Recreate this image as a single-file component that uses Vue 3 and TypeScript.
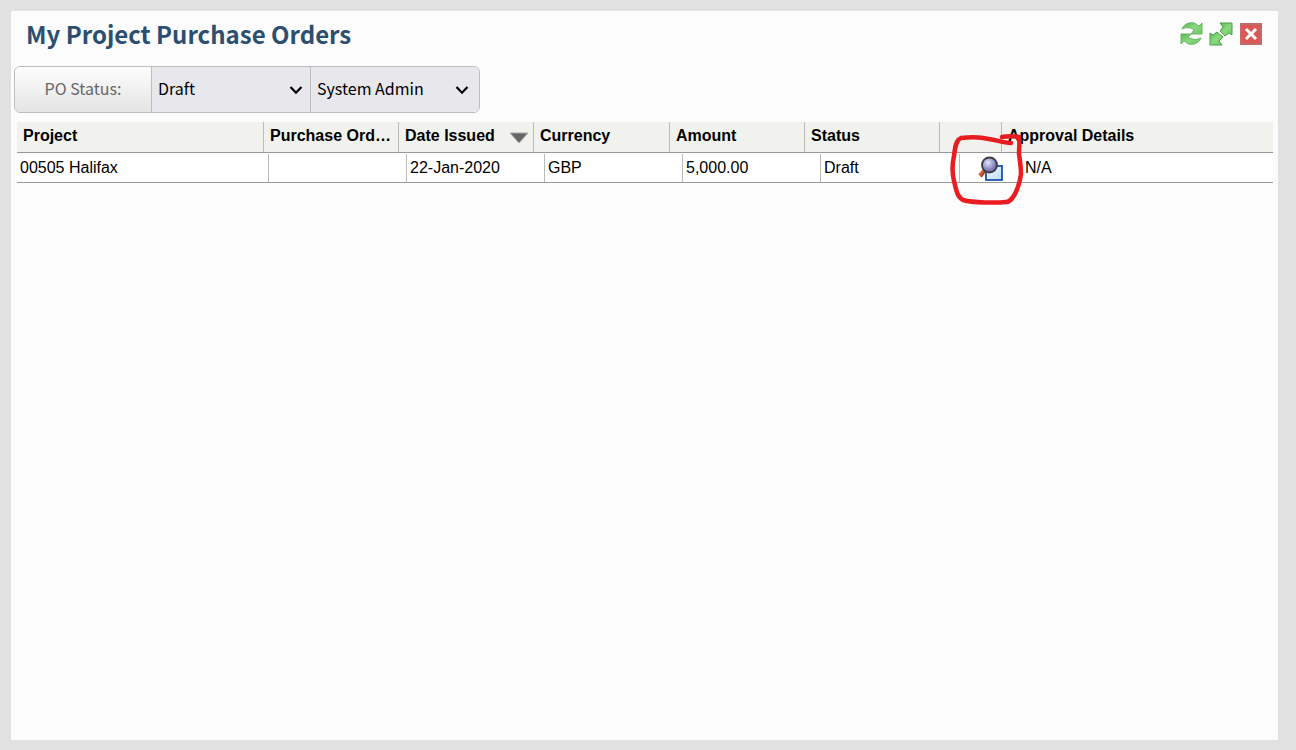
<script setup lang="ts">
import { ref } from 'vue'

interface Column {
  key: string
  label: string
  sorted?: boolean
}

interface Order {
  project: string
  number: string
  issued: string
  currency: string
  amount: string
  status: string
  approval: string
}

const columns: Column[] = [
  { key: 'project', label: 'Project' },
  { key: 'number', label: 'Purchase Ord…' },
  { key: 'issued', label: 'Date Issued', sorted: true },
  { key: 'currency', label: 'Currency' },
  { key: 'amount', label: 'Amount' },
  { key: 'status', label: 'Status' },
  { key: 'view', label: '' },
  { key: 'approval', label: 'Approval Details' },
]

const orders: Order[] = [
  {
    project: '00505 Halifax',
    number: '',
    issued: '22-Jan-2020',
    currency: 'GBP',
    amount: '5,000.00',
    status: 'Draft',
    approval: 'N/A',
  },
]

const status = ref('Draft')
const user = ref('System Admin')
</script>

<template>
  <main class="panel">
    <header class="panel-head">
      <h1>My Project Purchase Orders</h1>
      <div class="tools">
        <button type="button" class="tool" aria-label="Refresh">
          <svg viewBox="0 0 24 26" width="24" height="26">
            <defs>
              <linearGradient id="green" x1="0" y1="0" x2="1" y2="1">
                <stop offset="0" stop-color="#5cb755" />
                <stop offset="0.5" stop-color="#8ad880" />
                <stop offset="1" stop-color="#68c662" />
              </linearGradient>
            </defs>
            <g fill="url(#green)" stroke="#68b365" stroke-width="1" stroke-linejoin="round">
              <path d="M3 8 C5 3 10 1 15 2 C18 3 19 5 20 5 L23 2 V13 H12 L15 9 C12 6 7 6 3 8 Z" />
              <path d="M22 17 C20 22 15 24 10 23 C7 22 6 20 5 20 L2 23 V13 H12 L9 16 C13 19 18 19 22 17 Z" />
            </g>
          </svg>
        </button>
        <button type="button" class="tool" aria-label="Expand">
          <svg viewBox="0 0 24 26" width="24" height="26">
            <g fill="url(#green)" stroke="#4f9f4d" stroke-width="1" stroke-linejoin="round">
              <path d="M11 2 H23 V14 L20 12 L16 15 L11 10 L14 6 Z" />
              <path d="M1 12 L4 14 L8 11 L14 16 L10 20 L13 24 H1 Z" />
            </g>
          </svg>
        </button>
        <button type="button" class="tool" aria-label="Close">
          <svg viewBox="0 0 24 26" width="24" height="26">
            <rect x="2" y="3" width="20" height="20" fill="#dc5858" stroke="#bd6c6a" stroke-width="2" />
            <path d="M7 8 L17 18 M17 8 L7 18" stroke="#fff" stroke-width="3" />
          </svg>
        </button>
      </div>
    </header>

    <form class="filters" @submit.prevent>
      <label class="filter-label" for="po-status">PO Status:</label>
      <div class="picker">
        <select id="po-status" v-model="status">
          <option>Draft</option>
          <option>Approved</option>
        </select>
        <svg class="chevron" viewBox="0 0 14 10" width="14" height="10" aria-hidden="true">
          <path d="M1.500 2 L7 7.700 L12.500 2" />
        </svg>
      </div>
      <div class="picker picker-user">
        <select v-model="user" aria-label="User">
          <option>System Admin</option>
        </select>
        <svg class="chevron" viewBox="0 0 14 10" width="14" height="10" aria-hidden="true">
          <path d="M1.500 2 L7 7.700 L12.500 2" />
        </svg>
      </div>
    </form>

    <table class="orders">
      <thead>
        <tr>
          <th v-for="column in columns" :key="column.key" scope="col">
            <span>{{ column.label }}</span>
            <svg v-if="column.sorted" class="sort" viewBox="0 0 20 12" width="20" height="12" aria-hidden="true">
              <path d="M1 1 H19 L10 11 Z" fill="#666" stroke="#aaa" stroke-width="1" />
            </svg>
          </th>
        </tr>
      </thead>
      <tbody>
        <tr v-for="order in orders" :key="order.project">
          <td>{{ order.project }}</td>
          <td>{{ order.number }}</td>
          <td>{{ order.issued }}</td>
          <td>{{ order.currency }}</td>
          <td>{{ order.amount }}</td>
          <td>{{ order.status }}</td>
          <td class="view-cell">
            <button type="button" class="view" aria-label="View purchase order">
              <svg viewBox="0 0 26 26" width="26" height="26">
                <defs>
                  <linearGradient id="sheet" x1="0" y1="0" x2="1" y2="1">
                    <stop offset="0" stop-color="#fff" />
                    <stop offset="1" stop-color="#b5d9fb" />
                  </linearGradient>
                  <radialGradient id="lens" cx="0.4" cy="0.35" r="0.65">
                    <stop offset="0" stop-color="#e4e4fa" />
                    <stop offset="0.5" stop-color="#a0a0d0" />
                    <stop offset="1" stop-color="#6060a4" />
                  </radialGradient>
                </defs>
                <rect x="8" y="10" width="16" height="14" fill="url(#sheet)" stroke="#1d50b4" stroke-width="1.800" />
                <path d="M7 14 L2 20" stroke="#d2603c" stroke-width="4.500" />
                <path d="M8 14 L3 21" stroke="#653329" stroke-width="1" />
                <circle cx="11.500" cy="9" r="7.500" fill="url(#lens)" stroke="#3b3b46" stroke-width="1.800" />
              </svg>
            </button>
            <svg class="marker" viewBox="0 0 76 76" width="76" height="76" aria-hidden="true">
              <path
                d="M53 6 C58 5 65 5 70 6 C71 11 70 17 70 23 C71 30 72 36 72 43 C71 50 69 57 66 63 C63 68 61 71 57 71 C48 72 24 72 14 69 C8 66 7 58 5 50 C3 42 3 34 5 25 C6 16 7 9 12 7 C20 6 32 6 40 8 C48 9 54 12 62 12"
              />
            </svg>
          </td>
          <td>{{ order.approval }}</td>
        </tr>
      </tbody>
    </table>
  </main>
</template>

<style>
body {
  margin: 0;
  background: #e1e1e1;
}
</style>

<style scoped>
.panel {
  box-sizing: border-box;
  min-height: calc(100vh - 21px);
  margin: 11px 18px 10px 11px;
  background: #fcfcfc;
  color: #000;
  font-family: "Liberation Sans", Arial, sans-serif;
  font-size: 16px;
  display: flow-root;
}

.panel-head {
  display: flex;
  align-items: center;
  justify-content: space-between;
  height: 46px;
  padding: 0 15px;
}

h1 {
  margin: 0;
  color: #2c4e70;
  font-family: "Noto Sans CJK SC", "Noto Sans", sans-serif;
  font-size: 24px;
  font-weight: 600;
  line-height: 46px;
}

.tools {
  display: flex;
  gap: 6px;
}

.tool,
.view {
  display: block;
  padding: 0;
  border: 0;
  background: none;
}

.tool svg,
.view svg {
  display: block;
}

.filters {
  box-sizing: border-box;
  display: flex;
  width: 466px;
  max-width: 100%;
  height: 47px;
  margin: 9px 0 0 3px;
  border: 1px solid #bdbdbd;
  border-radius: 6px;
  overflow: hidden;
  font-family: "Noto Sans CJK SC", "Noto Sans", sans-serif;
  font-size: 16px;
}

.filter-label {
  width: 136px;
  background: linear-gradient(#fdfdfd, #e4e4e4);
  color: #666;
  line-height: 42px;
  text-align: center;
}

.picker {
  box-sizing: border-box;
  display: grid;
  align-items: center;
  width: 159px;
  border-left: 1px solid #bdbdbd;
  background: #e8e7ec;
}

.picker-user {
  flex: 1;
}

.picker select,
.chevron {
  grid-area: 1 / 1;
}

.picker select {
  width: 100%;
  height: 45px;
  padding: 0 6px 4px;
  border: 0;
  background: transparent;
  color: #000;
  font: inherit;
  appearance: none;
}

.chevron {
  justify-self: end;
  margin-right: 7px;
  pointer-events: none;
}

.picker-user .chevron {
  margin-right: 10px;
}

.chevron path {
  fill: none;
  stroke: #000;
  stroke-width: 2.2;
}

.orders {
  display: block;
  margin: 9px 5px 0 6px;
}

.orders thead,
.orders tbody {
  display: block;
}

.orders tr {
  display: grid;
  border-bottom: 1px solid #999;
}

.orders thead tr {
  grid-template-columns: 247px 135px 135px 136px 135px 135px 62px 1fr;
  height: 30px;
  background: #f1f2ed;
}

.orders tbody tr {
  grid-template-columns: 252px 138px 138px 138px 138px 139px 62px 1fr;
  height: 29px;
  background: #fff;
}

.orders th,
.orders td {
  box-sizing: border-box;
  min-width: 0;
  border-right: 1px solid #bbb;
  text-align: left;
  white-space: nowrap;
}

.orders th:last-child,
.orders td:last-child {
  border-right: 0;
}

.orders th {
  display: flex;
  align-items: center;
  justify-content: space-between;
  padding: 0 4px 2px 6px;
}

.orders td {
  margin-top: 1px;
  padding: 0 3px;
  line-height: 28px;
}

.sort {
  flex: none;
  margin-top: 4px;
}

.orders .view-cell {
  position: relative;
  display: flex;
  align-items: center;
  justify-content: center;
  padding: 2px 0 0;
  border-right-color: transparent;
}

.marker {
  position: absolute;
  top: -23px;
  left: -11px;
  pointer-events: none;
}

.marker path {
  fill: none;
  stroke: #e91c1f;
  stroke-width: 4.5;
  stroke-linecap: round;
  stroke-linejoin: round;
}
</style>
